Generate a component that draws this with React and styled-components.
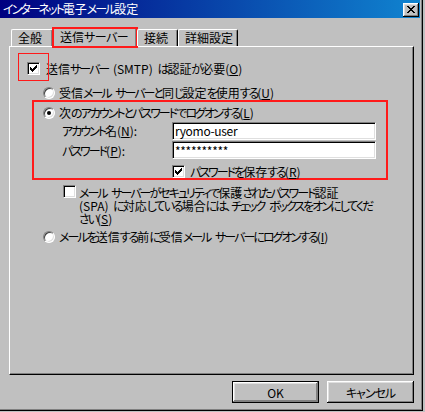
import React from "react";
import styled, { createGlobalStyle, css } from "styled-components";

const GlobalStyle = createGlobalStyle`
  html, body {
    margin: 0;
    padding: 0;
    background: #c0c0c0;
  }
  body {
    font-family: "Noto Sans CJK JP", "Noto Sans", sans-serif;
    font-size: 12px;
    color: #000;
    font-feature-settings: "palt";
    word-spacing: 2px;
  }
`;

const Window = styled.div`
  width: 423px;
  height: 411px;
  box-sizing: border-box;
  padding: 0 3px 3px 0;
  background: #c0c0c0;
  box-shadow: inset -1px -1px #000, inset -2px -2px #808080;
  display: flex;
  flex-direction: column;
`;

const TitleBar = styled.div`
  height: 18px;
  display: flex;
  align-items: center;
  justify-content: space-between;
  padding: 0 1px 0 3px;
  background: linear-gradient(90deg, #000080, #1084d0);
  color: #fff;
  line-height: 18px;
`;

const CloseButton = styled.button`
  width: 16px;
  height: 14px;
  padding: 0;
  margin-top: 1px;
  border: none;
  background: #c0c0c0;
  box-shadow: inset -1px -1px #000, inset 1px 1px #fff, inset -2px -2px #808080,
    inset 2px 2px #dfdfdf;
  display: flex;
  align-items: center;
  justify-content: center;
`;

const Body = styled.div`
  flex: 1;
  padding: 9px 6px 0 9px;
  display: flex;
  flex-direction: column;
`;

const TabStrip = styled.div`
  height: 19px;
  display: flex;
  align-items: flex-end;
  padding-left: 2px;
  position: relative;
  z-index: 1;
`;

const Tab = styled.div`
  position: relative;
  width: ${(p) => p.$width}px;
  height: 17px;
  box-sizing: border-box;
  padding-left: 6px;
  line-height: 16px;
  white-space: nowrap;
  background: #c0c0c0;
  border-top: 1px solid #fff;
  border-left: 1px solid #fff;
  border-right: 1px solid #000;
  border-radius: 2px 2px 0 0;
  box-shadow: inset -1px 0 #808080;
  ${(p) =>
    p.$active &&
    css`
      height: 20px;
      margin-bottom: -1px;
      line-height: 17px;
    `}
`;

const Marker = styled.span`
  position: absolute;
  pointer-events: none;
  border: ${(p) => p.$weight || 1}px solid #ff1a1a;
  top: ${(p) => p.$top}px;
  left: ${(p) => p.$left}px;
  width: ${(p) => p.$w}px;
  height: ${(p) => p.$h}px;
  box-sizing: border-box;
`;

const Panel = styled.div`
  width: 405px;
  height: 329px;
  box-sizing: border-box;
  border-top: 1px solid #fff;
  border-left: 1px solid #fff;
  border-right: 1px solid #000;
  border-bottom: 1px solid #000;
  box-shadow: inset -1px -1px #808080;
  display: flex;
  flex-direction: column;
  align-items: flex-start;
`;

const Row = styled.div`
  display: flex;
  align-items: ${(p) => (p.$top ? "flex-start" : "center")};
  gap: ${(p) => p.$gap ?? 4}px;
  margin-top: ${(p) => p.$mt || 0}px;
  margin-left: ${(p) => p.$ml || 0}px;
  min-height: 13px;
  line-height: 13px;
  white-space: nowrap;
`;

const Group = styled.div`
  width: 356px;
  height: 80px;
  box-sizing: border-box;
  margin: 1px 0 0 22px;
  border: 2px solid #ff1a1a;
  display: flex;
  flex-direction: column;
  align-items: flex-start;
`;

const BoxWrap = styled.span`
  position: relative;
  display: inline-flex;
  flex: none;
`;

const Box = styled.span`
  width: 13px;
  height: 13px;
  box-sizing: border-box;
  background: #fff;
  border: 1px solid;
  border-color: #808080 #fff #fff #808080;
  box-shadow: inset 1px 1px #000, inset -1px -1px #dfdfdf;
  display: inline-flex;
  align-items: center;
  justify-content: center;
  flex: none;
`;

const Radio = styled.span`
  width: 12px;
  height: 12px;
  box-sizing: border-box;
  border-radius: 50%;
  background: #fff;
  border: 1px solid;
  border-color: #808080 #fff #fff #808080;
  box-shadow: inset 1px 1px #404040, inset -1px -1px #dfdfdf;
  display: inline-flex;
  align-items: center;
  justify-content: center;
  flex: none;
  ${(p) =>
    p.$checked &&
    css`
      &::after {
        content: "";
        width: 4px;
        height: 4px;
        border-radius: 50%;
        background: #000;
      }
    `}
`;

const FieldLabel = styled.span`
  width: 110px;
  margin-left: 28px;
`;

const TextBox = styled.input`
  width: 204px;
  height: 18px;
  box-sizing: border-box;
  margin: 0;
  padding: 0 2px;
  border: 1px solid;
  border-color: #808080 #fff #fff #808080;
  box-shadow: inset 1px 1px #000, inset -1px -1px #dfdfdf;
  background: #fff;
  font: inherit;
  font-feature-settings: "palt";
  letter-spacing: -0.3px;
  color: #000;
  outline: none;
`;

const Note = styled.span`
  line-height: 13px;
  white-space: nowrap;
  margin-top: 1px;
`;

const ButtonRow = styled.div`
  display: flex;
  justify-content: flex-end;
  gap: 8px;
  margin-top: 6px;
`;

const Button = styled.button`
  width: 87px;
  height: 22px;
  padding: 0;
  background: #c0c0c0;
  font: inherit;
  font-feature-settings: "palt";
  color: #000;
  border: ${(p) => (p.$default ? "1px solid #000" : "none")};
  box-shadow: inset -1px -1px #000, inset 1px 1px #fff, inset -2px -2px #808080,
    inset 2px 2px #dfdfdf;
  ${(p) =>
    p.$default &&
    css`
      box-shadow: inset -1px -1px #808080, inset 1px 1px #fff,
        inset -2px -2px #808080, inset 2px 2px #dfdfdf;
    `}
`;

// kana in the old bitmap UI font are narrower than in Noto, so squeeze them
const KanaRun = styled.span`
  letter-spacing: ${(p) => p.$squeeze ?? -2}px;
`;

function Jp({ text, squeeze }) {
  return text
    .split(/([\u3041-\u30ff]+)/)
    .map((part, i) =>
      i % 2 ? (
        <KanaRun key={i} $squeeze={squeeze}>
          {part}
        </KanaRun>
      ) : (
        part
      )
    );
}

function Label({ text, mn, after }) {
  return (
    <span>
      <Jp text={text} />(<u>{mn}</u>){after}
    </span>
  );
}

function Check({ checked }) {
  const cols = [2, 3, 4, 3, 2, 1, 0];
  return (
    <Box>
      {checked && (
        <svg width="7" height="7" viewBox="0 0 7 7" shapeRendering="crispEdges">
          {cols.map((y, x) => (
            <rect key={x} x={x} y={y} width="1" height="3" fill="#000" />
          ))}
        </svg>
      )}
    </Box>
  );
}

function CloseGlyph() {
  const rows = [
    [[0, 2], [6, 2]],
    [[1, 2], [5, 2]],
    [[2, 4]],
    [[3, 2]],
    [[2, 4]],
    [[1, 2], [5, 2]],
    [[0, 2], [6, 2]],
  ];
  return (
    <svg width="8" height="7" viewBox="0 0 8 7" shapeRendering="crispEdges">
      {rows.map((segs, y) =>
        segs.map(([x, w]) => (
          <rect key={`${y}-${x}`} x={x} y={y} width={w} height="1" fill="#000" />
        ))
      )}
    </svg>
  );
}

const tabs = [
  { name: "全般", width: 42 },
  { name: "送信サーバー", width: 84, active: true },
  { name: "接続", width: 41 },
  { name: "詳細設定", width: 60 },
];

export default function App() {
  return (
    <>
      <GlobalStyle />
      <Window>
        <TitleBar>
          <span>
            <Jp text="インターネット電子メール設定" />
          </span>
          <CloseButton aria-label="閉じる">
            <CloseGlyph />
          </CloseButton>
        </TitleBar>
        <Body>
          <TabStrip>
            {tabs.map((t) => (
              <Tab key={t.name} $width={t.width} $active={t.active}>
                <Jp text={t.name} squeeze={-0.5} />
                {t.active && <Marker $weight={2} $top={-1} $left={-2} $w={86} $h={21} />}
              </Tab>
            ))}
          </TabStrip>
          <Panel>
            <Row $mt={15} $ml={17} $gap={6}>
              <BoxWrap>
                <Check checked />
                <Marker $top={-9} $left={-9} $w={31} $h={28} />
              </BoxWrap>
              <Label text="送信サーバー (SMTP) は認証が必要" mn="O" />
            </Row>
            <Row $mt={11} $ml={33}>
              <Radio />
              <Label text="受信メール サーバーと同じ設定を使用する" mn="U" />
            </Row>
            <Group>
              <Row $mt={4} $ml={9}>
                <Radio $checked />
                <Label text="次のアカウントとパスワードでログオンする" mn="L" />
              </Row>
              <Row $mt={3} $gap={0}>
                <FieldLabel>
                  <Label text="アカウント名" mn="N" after=":" />
                </FieldLabel>
                <TextBox readOnly value="ryomo-user" />
              </Row>
              <Row $mt={2} $gap={0}>
                <FieldLabel>
                  <Label text="パスワード" mn="P" after=":" />
                </FieldLabel>
                <TextBox readOnly value="**********" />
              </Row>
              <Row $mt={6} $ml={138} $gap={5}>
                <Check checked />
                <Label text="パスワードを保存する" mn="R" />
              </Row>
            </Group>
            <Row $mt={5} $ml={53} $gap={3} $top>
              <Check />
              <Note>
                <Jp text="メール サーバーがセキュリティで保護されたパスワード認証" />
                <br />
                <Jp text="(SPA) に対応している場合には、チェック ボックスをオンにしてくだ" />
                <br />
                <Label text="さい" mn="S" />
              </Note>
            </Row>
            <Row $mt={5} $ml={33}>
              <Radio />
              <Label text="メールを送信する前に受信メール サーバーにログオンする" mn="I" />
            </Row>
          </Panel>
          <ButtonRow>
            <Button $default>OK</Button>
            <Button>
              <Jp text="キャンセル" squeeze={-1} />
            </Button>
          </ButtonRow>
        </Body>
      </Window>
    </>
  );
}
